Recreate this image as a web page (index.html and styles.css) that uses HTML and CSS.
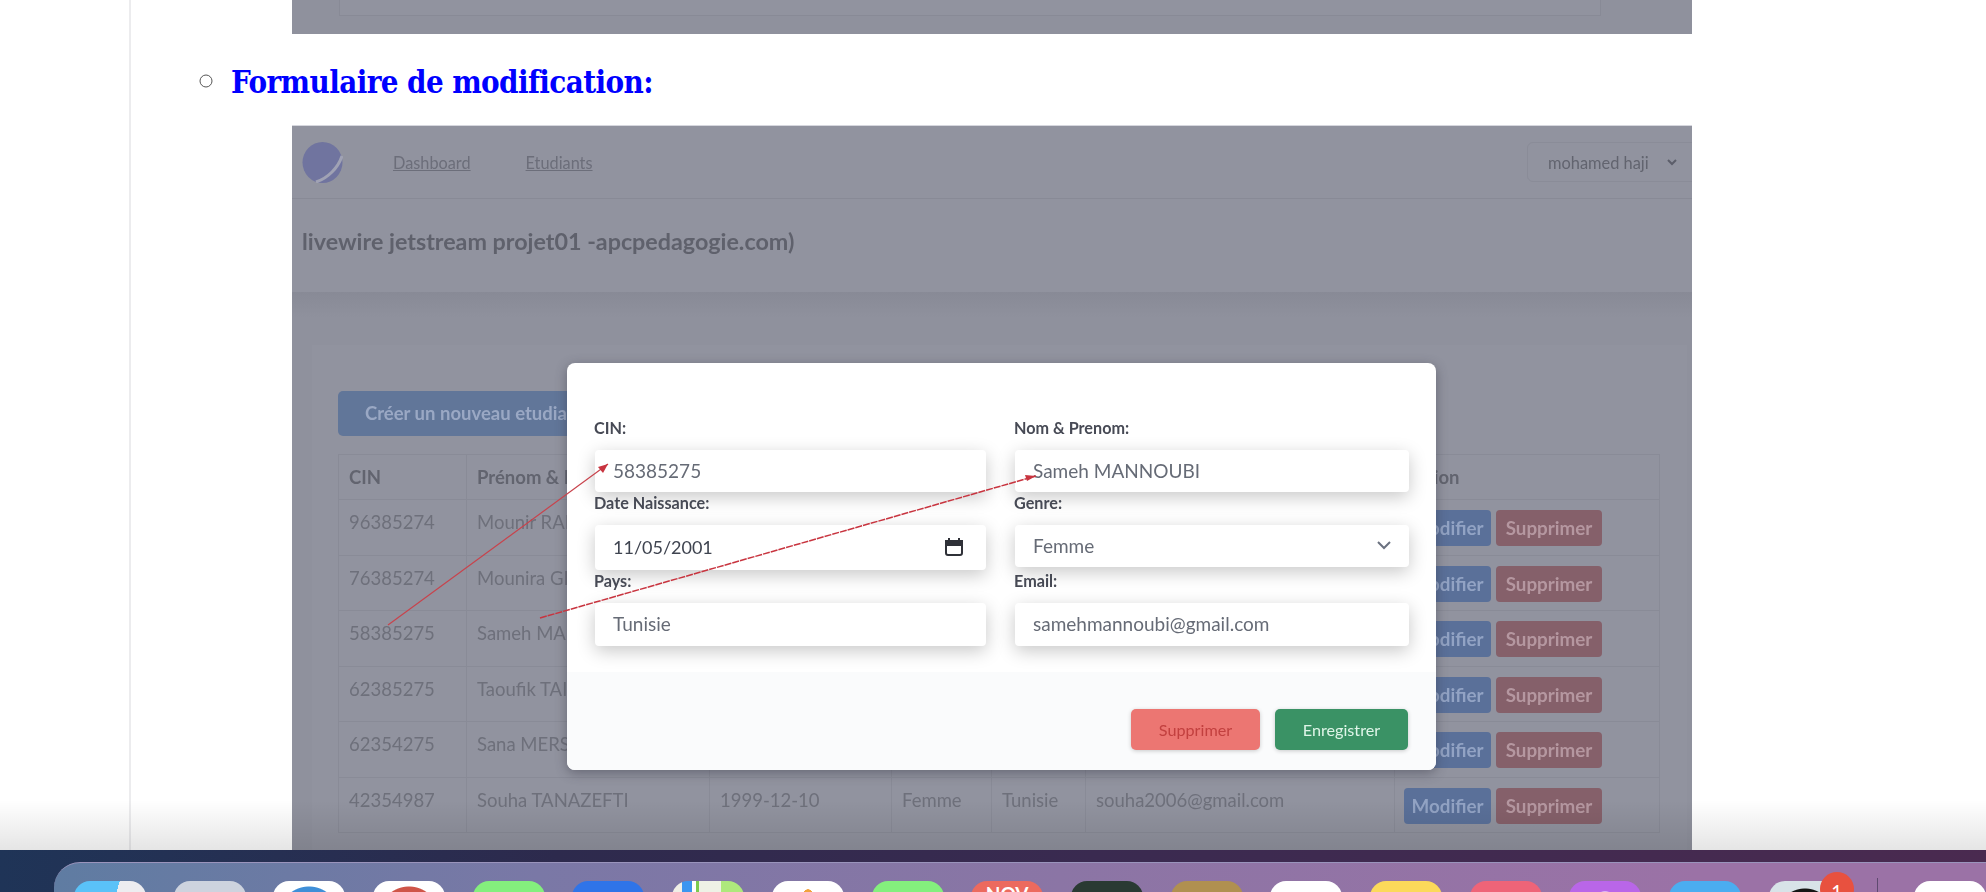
FILE: index.html
```html
<!DOCTYPE html>
<html>
<head>
    <title>Formulaire de modification</title>
    <link rel="stylesheet" href="styles.css">
</head>
<body>
    <div class="page">
        <div class="article">
            <div class="slice">
                <div class="slice-box"></div>
            </div>
            <ul class="steps">
                <li>
                    <div class="step-title">Formulaire de modification:</div>
                    <div class="shot">
                        <div class="shot-inner">
                            <div class="nav">
                                <svg class="logo" viewBox="0 0 41 41">
                                    <ellipse cx="20.5" cy="20.5" rx="20" ry="20.5" fill="#70749f"/>
                                    <path d="M40 14 C36 26 26 36 14 40" fill="none" stroke="#a0a2b4" stroke-width="3"/>
                                </svg>
                                <a class="nav-link">Dashboard</a>
                                <a class="nav-link">Etudiants</a>
                                <div class="user">
                                    <span>mohamed haji</span>
                                    <svg width="10" height="7" viewBox="0 0 10 7"><path d="M1 1 L5 5 L9 1" fill="none" stroke="#5c5e6a" stroke-width="2"/></svg>
                                </div>
                            </div>
                            <div class="title-bar">livewire jetstream projet01 -apcpedagogie.com)</div>
                            <div class="content">
                                <div class="card">
                                    <div class="create-btn">Créer un nouveau etudiant</div>
                                    <table class="students">
                                        <colgroup>
                                            <col class="c-cin"><col class="c-name"><col class="c-date"><col class="c-genre"><col class="c-pays"><col class="c-email"><col class="c-action">
                                        </colgroup>
                                        <tr><th>CIN</th><th>Prénom &amp; Nom</th><th></th><th></th><th></th><th></th><th>Action</th></tr>
                                        <tr><td>96385274</td><td>Mounir RAI</td><td></td><td></td><td></td><td></td><td><div class="actions"><span class="btn-edit">Modifier</span><span class="btn-del">Supprimer</span></div></td></tr>
                                        <tr><td>76385274</td><td>Mounira GH</td><td></td><td></td><td></td><td></td><td><div class="actions"><span class="btn-edit">Modifier</span><span class="btn-del">Supprimer</span></div></td></tr>
                                        <tr><td>58385275</td><td>Sameh MA</td><td></td><td></td><td></td><td></td><td><div class="actions"><span class="btn-edit">Modifier</span><span class="btn-del">Supprimer</span></div></td></tr>
                                        <tr><td>62385275</td><td>Taoufik TAI</td><td></td><td></td><td></td><td></td><td><div class="actions"><span class="btn-edit">Modifier</span><span class="btn-del">Supprimer</span></div></td></tr>
                                        <tr><td>62354275</td><td>Sana MERS</td><td></td><td></td><td></td><td></td><td><div class="actions"><span class="btn-edit">Modifier</span><span class="btn-del">Supprimer</span></div></td></tr>
                                        <tr><td>42354987</td><td>Souha TANAZEFTI</td><td>1999-12-10</td><td>Femme</td><td>Tunisie</td><td>souha2006@gmail.com</td><td><div class="actions"><span class="btn-edit">Modifier</span><span class="btn-del">Supprimer</span></div></td></tr>
                                    </table>
                                </div>
                            </div>

                            <div class="modal">
                                <div class="modal-body">
                                    <div class="field">
                                        <div class="field-label">CIN:</div>
                                        <div class="input muted">58385275</div>
                                    </div>
                                    <div class="field">
                                        <div class="field-label">Nom &amp; Prenom:</div>
                                        <div class="input muted">Sameh MANNOUBI</div>
                                    </div>
                                    <div class="field">
                                        <div class="field-label">Date Naissance:</div>
                                        <div class="input input-date">
                                            <span>11/05/2001</span>
                                            <svg width="20" height="20" viewBox="0 0 20 20">
                                                <rect x="2" y="4" width="16" height="14" rx="2" fill="none" stroke="#2f3138" stroke-width="2"/>
                                                <path d="M2 4 H18 V8 H2 Z M5 1 V4 M15 1 V4" fill="#2f3138" stroke="#2f3138" stroke-width="2"/>
                                            </svg>
                                        </div>
                                    </div>
                                    <div class="field">
                                        <div class="field-label">Genre:</div>
                                        <div class="input input-select muted">
                                            <span>Femme</span>
                                            <svg width="14" height="9" viewBox="0 0 14 9"><path d="M1 1 L7 7 L13 1" fill="none" stroke="#6b7280" stroke-width="2"/></svg>
                                        </div>
                                    </div>
                                    <div class="field field-last">
                                        <div class="field-label">Pays:</div>
                                        <div class="input muted">Tunisie</div>
                                    </div>
                                    <div class="field field-last">
                                        <div class="field-label">Email:</div>
                                        <div class="input muted">samehmannoubi@gmail.com</div>
                                    </div>
                                </div>
                                <div class="modal-footer">
                                    <div class="modal-btn modal-del">Supprimer</div>
                                    <div class="modal-btn modal-save">Enregistrer</div>
                                </div>
                            </div>
                        </div>

                        <svg class="arrows" viewBox="0 0 1400 725">
                            <path d="M96 499 L316 338" stroke="#c8434c" stroke-width="1.2" fill="none"/>
                            <path d="M316 338 L306 341 L311 347 Z" fill="#c8343f"/>
                            <path d="M248 492 L744 350" stroke="#c8343f" stroke-width="1.5" stroke-dasharray="7 1" fill="none"/>
                            <path d="M744 350 L733 349 L735 355 Z" fill="#c8343f"/>
                        </svg>
                    </div>
                </li>
            </ul>
        </div>
        <div class="fade"></div>
    </div>

    <div class="dock">
        <div class="tray">
            <div class="app app-finder"></div>
            <div class="app app-launch"></div>
            <div class="app app-safari"></div>
            <div class="app app-chrome"></div>
            <div class="app app-messages"></div>
            <div class="app app-mail"></div>
            <div class="app app-maps"></div>
            <div class="app app-photos"></div>
            <div class="app app-messages"></div>
            <div class="app app-calendar">NOV</div>
            <div class="app app-dark"></div>
            <div class="app app-brown"></div>
            <div class="app app-white"></div>
            <div class="app app-notes"></div>
            <div class="app app-pink"></div>
            <div class="app app-podcast"></div>
            <div class="app app-store"></div>
            <div class="app app-system"><span class="badge">1</span></div>
            <div class="dock-sep"></div>
            <div class="app app-white"></div>
        </div>
    </div>
</body>
</html>
```

FILE: styles.css
```css
html, body {
    height: 892px;
    margin: 0;
    overflow: hidden;
}

body {
    background: #ffffff;
    font-family: "Lato", "Open Sans", sans-serif;
}

.page {
    height: 850px;
    overflow: hidden;
    position: relative;
}

.article {
    border-left: 2px solid #ececee;
    height: 850px;
    margin-left: 129px;
    padding-left: 100px;
}

.fade {
    background: linear-gradient(to bottom, rgba(0, 0, 0, 0), rgba(0, 0, 0, 0.1));
    bottom: 0;
    height: 50px;
    left: 0;
    pointer-events: none;
    position: absolute;
    right: 0;
}

/* bottom of the previous screenshot */
.slice {
    background: #8f919d;
    height: 34px;
    margin-left: 61px;
    overflow: hidden;
    width: 1400px;
}

.slice-box {
    background: #91939f;
    border: 1px solid #888a96;
    height: 15px;
    margin-left: 47px;
    margin-top: -1px;
    width: 1260px;
}

.steps {
    list-style-type: circle;
    margin: 0;
    padding: 0;
}

.steps li {
    color: #555555;
    font-size: 36px;
}

.step-title {
    color: #0000ff;
    font-family: "DejaVu Serif Condensed", "DejaVu Serif", serif;
    font-size: 31px;
    font-stretch: condensed;
    font-weight: bold;
    letter-spacing: -0.6px;
    line-height: 86px;
    padding-top: 5px;
}

/* screenshot of the app */
.shot {
    background: #8f919d;
    border-top: 1px solid #d6d7de;
    font-size: 18.5px;
    height: 725px;
    margin-left: 61px;
    overflow: hidden;
    position: relative;
    width: 1400px;
}

.shot-inner {
    filter: blur(0.7px);
    height: 725px;
}

.nav {
    align-items: center;
    background: #91939f;
    border-bottom: 1px solid #888a96;
    display: flex;
    height: 72px;
    padding-left: 10px;
}

.logo {
    flex-shrink: 0;
    height: 41px;
    margin-right: 50px;
    width: 41px;
}

.nav-link {
    color: #6c6e7a;
    font-size: 16.3px;
    margin-right: 55px;
    text-decoration: underline;
}

.user {
    align-items: center;
    border: 1px solid #8a8c98;
    border-radius: 6px;
    color: #62646f;
    display: flex;
    flex-shrink: 0;
    font-size: 16.4px;
    gap: 18px;
    height: 38px;
    margin-left: auto;
    margin-right: -30px;
    padding: 0 12px 0 20px;
    width: 161px;
}

.title-bar {
    background: #91939f;
    color: #5f616c;
    font-size: 23.3px;
    font-weight: 700;
    height: 93px;
    line-height: 84px;
    padding-left: 10px;
}

.content {
    background: linear-gradient(to bottom, #888a96, #8f919d 26px);
    padding: 53px 5px 0 20px;
}

.card {
    background: #91939f;
    height: 500px;
    padding: 46px 0 0 26px;
}

.create-btn {
    background: #617699;
    border-radius: 5px;
    color: #9aa8c4;
    font-size: 18.5px;
    font-weight: 700;
    height: 45px;
    line-height: 45px;
    margin-bottom: 18px;
    padding-left: 27px;
    width: 300px;
}

.students {
    border-collapse: collapse;
    color: #6e707b;
    font-size: 18.5px;
    table-layout: fixed;
    width: 1321px;
}

.students th {
    color: #62646f;
    font-weight: 700;
    height: 44px;
    text-align: left;
}

.students th, .students td {
    border: 1px solid #898b97;
    padding: 0 10px;
    white-space: nowrap;
}

.students td {
    height: 43.5px;
    padding-top: 11px;
    vertical-align: top;
}

.c-cin { width: 128px; }
.c-name { width: 243px; }
.c-date { width: 182px; }
.c-genre { width: 100px; }
.c-pays { width: 94px; }
.c-email { width: 309px; }
.c-action { width: 265px; }

.actions {
    display: flex;
    gap: 5px;
    margin-left: -1px;
    margin-top: -1px;
}

.btn-edit, .btn-del {
    border-radius: 4px;
    font-size: 18.8px;
    font-weight: 700;
    height: 36px;
    line-height: 36px;
    text-align: center;
}

.btn-edit {
    background: #5a7099;
    color: #92a3c4;
    width: 87px;
}

.btn-del {
    background: #85606a;
    color: #b597a0;
    width: 106px;
}

/* dialog over the table */
.modal {
    background: #ffffff;
    border-radius: 8px;
    box-shadow: 0 3px 12px rgba(50, 52, 64, 0.45);
    height: 407px;
    left: 275px;
    overflow: hidden;
    position: absolute;
    top: 237px;
    width: 869px;
}

.modal-body {
    box-sizing: border-box;
    column-gap: 29px;
    display: grid;
    grid-template-columns: 391px 394px;
    grid-template-rows: 75px 78px 74px;
    height: 309px;
    padding: 55px 0 0 28px;
}

.field-label {
    color: #474a55;
    font-size: 16.2px;
    font-weight: 700;
    line-height: 20px;
    margin-bottom: 12px;
    margin-left: -1px;
}

.input {
    align-items: center;
    border-radius: 4px;
    box-shadow: 0 5px 18px rgba(0, 0, 0, 0.22);
    box-sizing: border-box;
    color: #3f4450;
    display: flex;
    font-size: 18px;
    height: 42px;
    justify-content: space-between;
    padding: 0 22px 2px 18px;
}

.field-last .input {
    height: 43px;
}

.input-date {
    height: 45px;
}

.input-select {
    height: 42px;
    padding-right: 18px;
}

.muted {
    color: #666b76;
    font-size: 19px;
}

.modal-footer {
    align-items: flex-end;
    background: #fafbfc;
    box-sizing: border-box;
    display: flex;
    gap: 15px;
    height: 98px;
    justify-content: flex-end;
    padding: 0 28px 20px 0;
}

.modal-btn {
    border-radius: 5px;
    box-shadow: 0 1px 4px rgba(0, 0, 0, 0.2);
    font-size: 16.2px;
    height: 41px;
    line-height: 41px;
    text-align: center;
}

.modal-del {
    background: #ec7672;
    color: #c2403f;
    width: 129px;
}

.modal-save {
    background: #3a9265;
    color: #dff5e8;
    width: 133px;
}

.arrows {
    height: 725px;
    left: 0;
    pointer-events: none;
    position: absolute;
    top: 0;
    width: 1400px;
}

/* mac dock at the bottom */
.dock {
    background: linear-gradient(to right, #1f3457, #2d2a4d 28%, #3a2a50 55%, #4a2a50);
    box-sizing: border-box;
    height: 42px;
    overflow: hidden;
    padding: 12px 0 0 54px;
}

.tray {
    background: linear-gradient(to right, #5f7ca2, #7a78a6 25%, #8b75a5 52%, #9b72a6 85%);
    border-radius: 26px 0 0 0;
    border-top: 1px solid #9a94bc;
    box-sizing: border-box;
    display: flex;
    gap: 27.7px;
    height: 40px;
    padding: 18px 0 0 20px;
}

.app {
    border-radius: 16px;
    color: #ffffff;
    flex-shrink: 0;
    font-size: 19px;
    font-weight: 700;
    height: 72px;
    position: relative;
    text-align: center;
    width: 72px;
}

.app-finder { background: linear-gradient(105deg, #5ac2f8 50%, #ededf0 50%); }
.app-launch { background: #cdd3de; }
.app-safari { background: radial-gradient(circle at 50% 36px, #3f8fd8 30px, #ffffff 31px); }
.app-chrome { background: radial-gradient(circle at 50% 36px, #cf5548 30px, #ffffff 31px); }
.app-messages { background: #84ef7d; }
.app-mail { background: #2f74e8; }
.app-maps { background: linear-gradient(to right, #f0efe6 14%, #3c96f0 14%, #3c96f0 28%, #ffffff 28%, #ffffff 34%, #7ccb50 34%, #7ccb50 38%, #eef2e6 38%, #eef2e6 68%, #aee87c 68%); }
.app-photos { background: radial-gradient(ellipse 10px 26px at 50% 34px, #f2a23c 98%, #ffffff 100%); }
.app-calendar { background: #ec6a5e; line-height: 26px; }
.app-dark { background: #2a3a33; }
.app-brown { background: #b09050; }
.app-white { background: #ffffff; }
.app-notes { background: #fcd95a; }
.app-pink { background: #ee6478; }
.app-podcast { background: radial-gradient(circle at 50% 26px, #b966e8 12px, #ffffff 13px, #ffffff 15px, #b966e8 16px); }
.app-store { background: #4badf0; }
.app-system { background: radial-gradient(circle at 50% 36px, #151515 28px, #d8e3e8 29px); }

.badge {
    background: #e8513f;
    border-radius: 50%;
    color: #ffffff;
    font-size: 19px;
    font-weight: 400;
    height: 34px;
    left: 51px;
    line-height: 40px;
    position: absolute;
    top: -9px;
    width: 34px;
}

.dock-sep {
    background: #5f4a70;
    flex-shrink: 0;
    height: 30px;
    margin: -3px 8.3px 0;
    width: 1px;
}
```
